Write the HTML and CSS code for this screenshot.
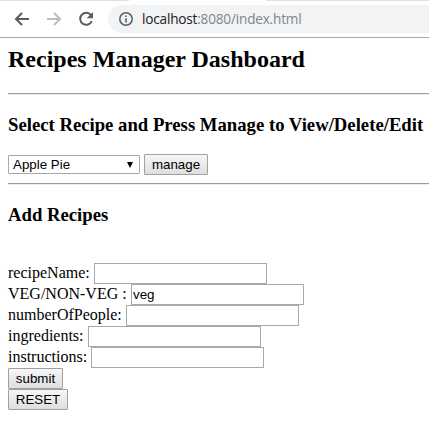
FILE: index.html
```html
<!DOCTYPE html>
<html lang="en">
<head>
<meta charset="utf-8">
<title>Recipes Manager Dashboard</title>
<link rel="stylesheet" href="styles.css">
</head>
<body>
<header class="browser">
  <div class="tabs"><span class="tab-left"></span><span class="tab-right"></span></div>
  <div class="toolbar">
    <svg class="nav" viewBox="0 0 16 16"><path d="M15 8H2.5M8 2 2 8l6 6"/></svg>
    <svg class="nav nav-off" viewBox="0 0 16 16"><path d="M1 8h12.5M8 2l6 6-6 6"/></svg>
    <svg class="nav" viewBox="0 0 16 16"><path d="M13 4.2A6 6 0 1 0 13.8 10"/><path class="solid" d="M15 1v6.3H8.7z"/></svg>
    <div class="address">
      <svg class="info" viewBox="0 0 14 14"><circle cx="7" cy="7" r="6.2"/><path d="M7 6.2v4.3M7 3.4v1.6"/></svg>
      <span class="url"><span class="host">localhost</span>:8080/index.html</span>
    </div>
  </div>
</header>
<main class="page">
  <h2>Recipes Manager Dashboard</h2>
  <hr>
  <h3 class="select-title">Select Recipe and Press Manage to View/Delete/Edit</h3>
  <div class="picker">
    <div class="select"><span>Apple Pie</span><svg class="arrow" viewBox="0 0 6 6"><path d="M0 0h6L3 6z"/></svg></div>
    <button class="manage">manage</button>
  </div>
  <hr>
  <h3 class="add-title">Add Recipes</h3>
  <form class="form">
    <div class="row"><label class="l-name">recipeName:</label><input type="text"></div>
    <div class="row"><label class="l-veg">VEG/NON-VEG :</label><input type="text" value="veg"></div>
    <div class="row"><label class="l-people">numberOfPeople:</label><input type="text"></div>
    <div class="row"><label class="l-ingr">ingredients:</label><input type="text"></div>
    <div class="row"><label class="l-instr">instructions:</label><input type="text"></div>
    <div class="row"><button type="button" class="submit">submit</button></div>
    <div class="row"><button type="button" class="reset">RESET</button></div>
  </form>
</main>
</body>
</html>
```
FILE: styles.css
```css
* { box-sizing: border-box; }
body { margin: 0; background: #fff; color: #000; font: 16px "Liberation Serif", serif; overflow: hidden; }
.browser { height: 38px; border-bottom: 1px solid #a9a9a9; display: flex; flex-direction: column; }
.tabs { height: 1px; display: flex; justify-content: space-between; }
.tab-left { width: 129px; background: #dee1e6; }
.tab-right { width: 163px; background: #dee1e6; }
.toolbar { flex: 1; display: flex; align-items: center; padding: 0 0 0 14px; }
.nav { width: 16px; height: 16px; margin-right: 16px; fill: none; stroke: #5a5d61; stroke-width: 2; flex: none; }
.nav-off { stroke: #babcbe; }
.nav .solid { fill: #5a5d61; stroke: none; }
.address { flex: 1; height: 28px; margin-left: -2px; background: #f1f3f4; border-radius: 14px 0 0 14px; display: flex; align-items: center; padding-left: 11px; }
.info { width: 14px; height: 14px; fill: none; stroke: #5f6368; stroke-width: 1.6; margin-right: 9px; }
.url { font: 13.6px "Open Sans", sans-serif; letter-spacing: -0.19px; padding-bottom: 2px; color: #80868b; white-space: nowrap; }
.host { color: #202124; }
.page { padding: 0 0 0 8px; }
h2 { margin: 0; height: 55px; padding-top: 7px; font-size: 24px; line-height: 28px; white-space: nowrap; }
hr { margin: 0; height: 2px; border: 0; border-top: 1px solid #9a9a9a; border-bottom: 1px solid #eee; }
h3 { margin: 0; font-size: 18.72px; line-height: 22px; white-space: nowrap; }
.select-title { height: 59px; padding-top: 19px; }
.picker { display: flex; align-items: center; gap: 4px; height: 21px; margin-bottom: 8px; }
.select { width: 132px; height: 19px; border: 1px solid #a9a9a9; border-radius: 1px; display: flex; align-items: center; justify-content: space-between; padding: 0 6px 0 4px; font: 13.333px "Liberation Sans", sans-serif; }
.arrow { width: 6px; height: 6px; }
button { height: 21px; padding: 0; border: 1px solid #a0a0a0; border-radius: 1px; background: linear-gradient(#f6f6f6, #dedede); font: 13.333px "Liberation Sans", sans-serif; color: #000; }
.manage { width: 64px; }
.submit { width: 55px; }
.reset { width: 60px; }
.add-title { height: 78px; padding-top: 19px; }
.row { height: 21px; display: flex; align-items: center; }
label { white-space: nowrap; line-height: 18px; padding-bottom: 2px; }
.l-name { width: 86px; }
.l-veg { width: 123px; }
.l-people { width: 118px; }
.l-ingr { width: 80px; }
.l-instr { width: 83px; }
input { width: 173px; height: 21px; padding: 1px; border: 1px solid #a9a9a9; background: #fff; font: 13.333px "Liberation Sans", sans-serif; color: #000; }
```
